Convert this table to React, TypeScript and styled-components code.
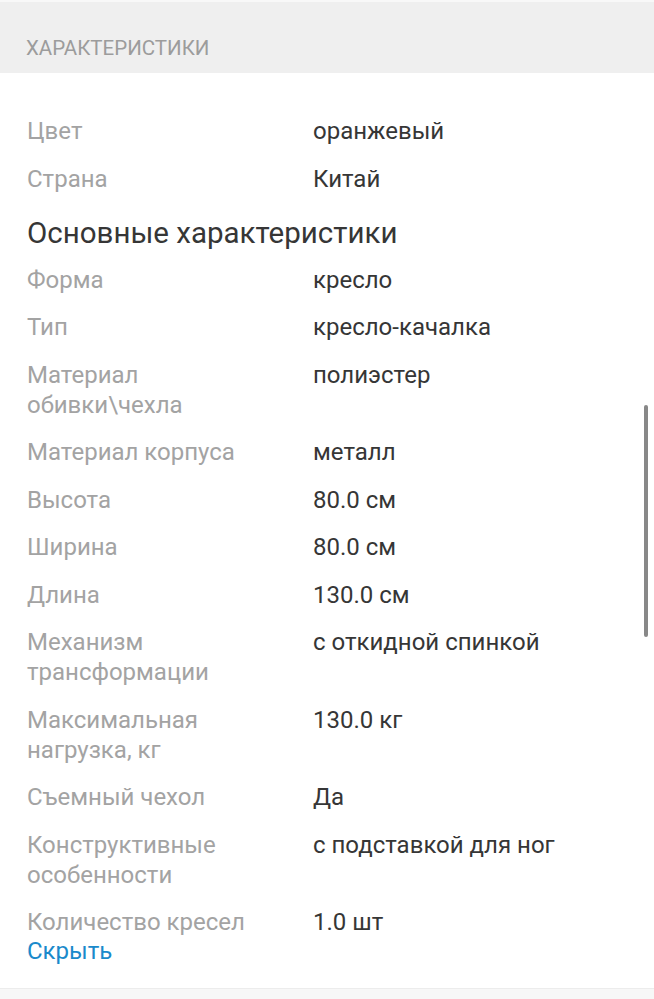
import React from "react";
import styled, { createGlobalStyle } from "styled-components";

const Global = createGlobalStyle`
  html, body { margin: 0; padding: 0; background: #fff; }
  body { font-family: Roboto, "Noto Sans", sans-serif; overflow: hidden; }
`;

const Page = styled.div`
  position: relative;
  width: 654px;
  height: 999px;
  overflow: hidden;
  background: #fff;
  border-top: 2px solid #f8f8f8;
  box-sizing: border-box;
`;

const SectionHeader = styled.div`
  height: 71px;
  background: #efefef;
  display: flex;
  align-items: flex-end;
  padding: 0 26px 13px;
  box-sizing: border-box;
  font-size: 20.5px;
  line-height: 24px;
  color: #9c9c9c;
`;

const Body = styled.div`
  padding: 43px 27px 0;
  display: flex;
  flex-direction: column;
`;

const List = styled.div`
  display: flex;
  flex-direction: column;
  gap: 17.5px;
`;

const Row = styled.div`
  display: grid;
  grid-template-columns: 260px 1fr;
  column-gap: 26px;
  font-size: 24px;
  line-height: 30px;
`;

const Label = styled.div`
  color: #a3a3a3;
`;

const Value = styled.div`
  color: #363636;
`;

const GroupTitle = styled.div`
  font-size: 29.5px;
  line-height: 36px;
  color: #363636;
  margin: 21px 0 14px;
`;

const HideLink = styled.div`
  font-size: 24px;
  line-height: 30px;
  color: #1a8acb;
  margin-top: -1px;
`;

const Footer = styled.div`
  position: absolute;
  left: 0;
  right: 0;
  bottom: 0;
  height: 10px;
  background: #f7f7f7;
  border-top: 1px solid #ececec;
`;

const ScrollThumb = styled.div`
  position: absolute;
  left: 644px;
  top: 403px;
  width: 4px;
  height: 232px;
  border-radius: 2px;
  background: #888;
`;

const top = [
  ["Цвет", "оранжевый"],
  ["Страна", "Китай"],
];

const main = [
  ["Форма", "кресло"],
  ["Тип", "кресло-качалка"],
  ["Материал обивки\\чехла", "полиэстер"],
  ["Материал корпуса", "металл"],
  ["Высота", "80.0 см"],
  ["Ширина", "80.0 см"],
  ["Длина", "130.0 см"],
  ["Механизм трансформации", "с откидной спинкой"],
  ["Максимальная нагрузка, кг", "130.0 кг"],
  ["Съемный чехол", "Да"],
  ["Конструктивные особенности", "с подставкой для ног"],
  ["Количество кресел", "1.0 шт"],
];

export default function App() {
  return (
    <>
      <Global />
      <Page>
        <SectionHeader>ХАРАКТЕРИСТИКИ</SectionHeader>
        <Body>
          <List>
            {top.map(([l, v]) => (
              <Row key={l}>
                <Label>{l}</Label>
                <Value>{v}</Value>
              </Row>
            ))}
          </List>
          <GroupTitle>Основные характеристики</GroupTitle>
          <List>
            {main.map(([l, v]) => (
              <Row key={l}>
                <Label>{l}</Label>
                <Value>{v}</Value>
              </Row>
            ))}
          </List>
          <HideLink>Скрыть</HideLink>
        </Body>
        <ScrollThumb />
        <Footer />
      </Page>
    </>
  );
}
